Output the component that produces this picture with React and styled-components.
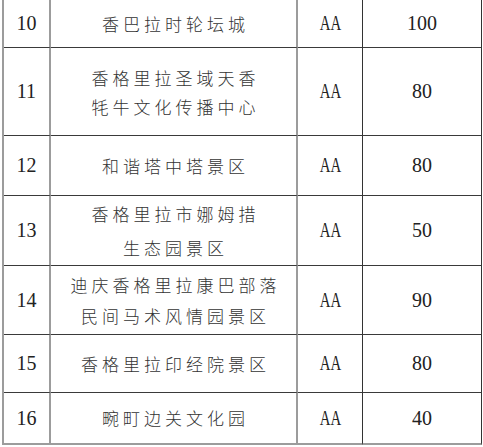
import React from "react";
import styled, { createGlobalStyle } from "styled-components";

const GlobalStyle = createGlobalStyle`
  html, body {
    margin: 0;
    padding: 0;
    background: #ffffff;
    overflow: hidden;
  }
`;

// Table shell
const Table = styled.div`
  margin-left: 2px;
  width: 478px;
  border-left: 2px solid #9c9c9c;
  display: flex;
  flex-direction: column;
`;

const Row = styled.div`
  display: grid;
  grid-template-columns: 47px 247px 65px 119px;
  height: ${(props) => props.$h}px;
`;

const Cell = styled.div`
  box-sizing: border-box;
  display: flex;
  flex-direction: column;
  align-items: center;
  justify-content: center;
  border-bottom: ${(props) => (props.$last ? "2px solid #9c9c9c" : "1px solid #3a3a3a")};
  border-right: ${(props) => (props.$soft ? "2px solid #9c9c9c" : "1px solid #333333")};
`;

const NumCell = styled(Cell)`
  font-family: "Liberation Serif", "Times New Roman", serif;
  font-size: 20px;
  color: #222222;
`;

const NameCell = styled(Cell)`
  font-family: "Noto Sans CJK SC", "Noto Sans", sans-serif;
  font-weight: 300;
  font-size: 17px;
  letter-spacing: 4px;
  padding-left: 4px;
  color: #333333;
  line-height: ${(props) => props.$lh || 20}px;
`;

const Grade = styled.span`
  display: inline-block;
  font-family: "Liberation Serif", "Times New Roman", serif;
  font-size: 20px;
  color: #222222;
  transform: scaleX(0.74);
`;

const rows = [
  { no: 10, name: ["香巴拉时轮坛城"], score: 100, h: 48 },
  { no: 11, name: ["香格里拉圣域天香", "牦牛文化传播中心"], score: 80, h: 88, lh: 29 },
  { no: 12, name: ["和谐塔中塔景区"], score: 80, h: 60 },
  { no: 13, name: ["香格里拉市娜姆措", "生态园景区"], score: 50, h: 70, lh: 34 },
  { no: 14, name: ["迪庆香格里拉康巴部落", "民间马术风情园景区"], score: 90, h: 69, lh: 31 },
  { no: 15, name: ["香格里拉印经院景区"], score: 80, h: 58 },
  { no: 16, name: ["畹町边关文化园"], score: 40, h: 52 },
];

const App = () => {
  return (
    <>
      <GlobalStyle />
      <Table>
        {rows.map((r, i) => {
          const last = i === rows.length - 1;
          return (
            <Row key={r.no} $h={r.h}>
              <NumCell $soft $last={last}>{r.no}</NumCell>
              <NameCell $soft $last={last} $lh={r.lh}>
                {r.name.map((line) => (
                  <div key={line}>{line}</div>
                ))}
              </NameCell>
              <NumCell $last={last}>
                <Grade>AA</Grade>
              </NumCell>
              <NumCell $last={last}>{r.score}</NumCell>
            </Row>
          );
        })}
      </Table>
    </>
  );
};

export default App;
